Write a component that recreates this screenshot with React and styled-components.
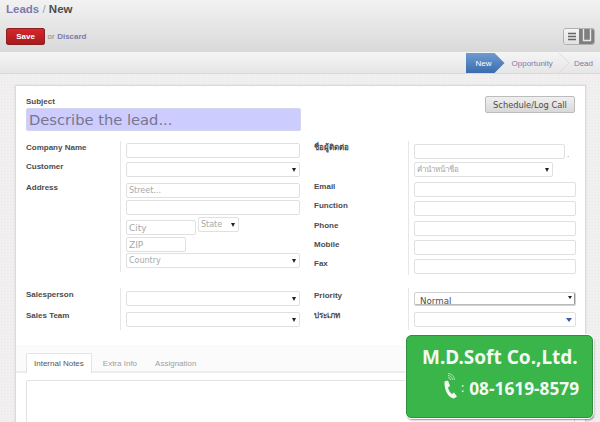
import React from 'react'
import styled, { createGlobalStyle } from 'styled-components'

const Global = createGlobalStyle`
  html, body {
    margin: 0;
    padding: 0;
    width: 600px;
    height: 422px;
    overflow: hidden;
    font-family: "Liberation Sans", Arial, sans-serif;
    color: #4c4c4c;
  }
  * { box-sizing: border-box; }
`

const Page = styled.div`
  position: relative;
  width: 600px;
  height: 422px;
  overflow: hidden;
  background-color: #f0eeee;
`
const Header = styled.div`
  height: 52px;
  padding: 3px 5px 0 6px;
  background: linear-gradient(#f2f2f2, #d9d9d9);
`
const Crumbs = styled.div`
  font-size: 11.5px;
  font-weight: bold;
  line-height: 13px;
  color: #4c4c4c;
`
const CrumbLink = styled.span`
  color: #7c7bad;
`
const CrumbSep = styled.span`
  color: #a0a0a0;
  font-weight: normal;
`
const ActionRow = styled.div`
  display: flex;
  justify-content: space-between;
  align-items: center;
  margin-top: 12px;
`
const SaveGroup = styled.div`
  display: flex;
  align-items: center;
  gap: 2.500px;
  font-size: 8px;
  color: #888;
`
const SaveButton = styled.button`
  width: 39px;
  height: 17px;
  padding: 0;
  border: 1px solid #8a2020;
  border-radius: 2px;
  background: linear-gradient(#d8262c, #a81a1e);
  color: #fff;
  font: bold 8px "Liberation Sans", sans-serif;
`
const Discard = styled.span`
  color: #7c7bad;
  font-weight: bold;
`
const Switch = styled.div`
  display: flex;
  width: 32px;
  height: 17px;
  border: 1px solid #b0b0b0;
  border-radius: 3px;
  overflow: hidden;
`
const SwitchPart = styled.div`
  flex: 1;
  display: flex;
  align-items: ${p => (p.$on ? 'flex-start' : 'center')};
  justify-content: center;
  background: ${p => (p.$on ? '#7f7f7f' : 'linear-gradient(#f4f4f4, #e2e2e2)')};
`
const StatusBar = styled.div`
  height: 22px;
  display: flex;
  justify-content: flex-end;
  align-items: stretch;
  padding-right: 7px;
  border-top: 1px solid #f4f4f4;
  border-bottom: 1px solid #d8d8d8;
  background: linear-gradient(#f4f4f4, #e6e6e6);
  font-size: 8px;
`
const StepActive = styled.div`
  width: 39px;
  padding-left: 10px;
  display: flex;
  align-items: center;
  color: #fff;
  background: linear-gradient(#6f9bd0, #3a6cae);
  clip-path: polygon(0 0, 29px 0, 100% 50%, 29px 100%, 0 100%);
`
const Step = styled.div`
  display: flex;
  align-items: center;
  color: #7c7bad;
  margin-left: ${p => p.$gap}px;
`
const StepChevron = styled.svg`
  width: 11px;
  height: 20px;
  margin-left: 6px;
  flex: none;
`
const Sheet = styled.div`
  height: 348px;
  padding: 11px 14px 0 15px;
  background-color: #f1efef;
  background-image: radial-gradient(#e8e6e6 0.6px, transparent 0.6px);
  background-size: 3px 3px;
`
const Card = styled.div`
  height: 400px;
  background: #fff;
  border: 1px solid #dadada;
  box-shadow: 0 0 2px #d8d8e0;
`
const Top = styled.div`
  display: flex;
  justify-content: space-between;
  align-items: flex-start;
  height: 55px;
  padding: 10px 10px 0 10px;
`
const SubjectLabel = styled.div`
  font-size: 8px;
  font-weight: bold;
  line-height: 11px;
  margin-bottom: 1px;
`
const SubjectInput = styled.div`
  width: 275px;
  height: 23px;
  padding-left: 2px;
  background: #ccccff;
  border: 1px solid #d4d4ec;
  border-radius: 2px;
  font: 14.7px/21px "DejaVu Sans", sans-serif;
  color: #77768c;
`
const ScheduleButton = styled.button`
  width: 90px;
  height: 17px;
  padding: 0;
  border: 1px solid #bcbcbc;
  border-radius: 2px;
  background: linear-gradient(#f0f0f0, #d8d8d8);
  color: #4c4c4c;
  font: 8.3px "DejaVu Sans", sans-serif;
`
const Columns = styled.div`
  display: flex;
  padding-left: 10px;
  height: ${p => p.$h}px;
`
const Column = styled.div`
  flex: none;
  display: grid;
  grid-template-columns: 94px ${p => p.$field}px;
  grid-auto-rows: min-content;
  align-content: start;
  width: 288px;
`
const Label = styled.div`
  font-size: 8px;
  font-weight: bold;
  line-height: 10px;
  color: #4c4c4c;
  padding-top: ${p => p.$top || 0}px;
`
const Cell = styled.div`
  border-left: 1px solid #e6e6e6;
  padding: ${p => p.$top || 0}px 0 ${p => p.$bottom || 0}px 5px;
`
const Input = styled.div`
  display: flex;
  justify-content: space-between;
  align-items: center;
  width: ${p => (p.$w ? p.$w + 'px' : '100%')};
  height: 15px;
  padding: 0 3px 0 2px;
  margin-top: ${p => p.$mt || 0}px;
  border: 1px solid #e0e0e0;
  border-radius: 2px;
  background: #fff;
  font: ${p => (p.$big ? 9 : 8)}px "DejaVu Sans", "Noto Sans", sans-serif;
  color: #a8a8a8;
`
const Arrow = styled.span`
  width: 0;
  height: 0;
  border-left: 2px solid transparent;
  border-right: 2px solid transparent;
  border-top: 4px solid ${p => p.$color || '#222'};
`
const TypeArrow = styled(Arrow)`
  border-left-width: 3px;
  border-right-width: 3px;
`
const CityRow = styled.div`
  display: flex;
  align-items: flex-start;
  gap: 2px;
`
const NameRow = styled.div`
  display: flex;
  align-items: flex-end;
  gap: 2px;
  font-size: 8px;
  color: #777;
`
const PrioritySelect = styled(Input)`
  height: 14px;
  border-color: #d0d0d0;
  box-shadow: inset 0 -1px 0 #bbb, inset -1px 0 0 #999;
  color: #4c4c4c;
  font-size: 8.7px;
  padding: 3px 3px 0 5px;
`
const PriorityArrow = styled(Arrow)`
  margin-top: -6px;
  border-top-width: 3px;
`
const TabBand = styled.div`
  display: flex;
  align-items: flex-end;
  height: 28px;
  margin-top: 13px;
  padding-left: 10px;
  background: #fbfbfb;
  border-bottom: 2px solid #ececec;
`
const Tab = styled.div`
  height: 20px;
  margin-bottom: -2px;
  padding: 0 ${p => (p.$active ? 7 : 8)}px;
  margin-right: ${p => (p.$active ? 2 : 0)}px;
  display: flex;
  align-items: center;
  font-size: 8px;
  color: ${p => (p.$active ? '#555' : '#a0a0a0')};
  background: ${p => (p.$active ? '#fff' : 'transparent')};
  border: 1px solid ${p => (p.$active ? '#e4e4e4' : 'transparent')};
  border-bottom: none;
  border-radius: 2px 2px 0 0;
`
const Notes = styled.div`
  height: 60px;
  margin: 7px 10px 0 10px;
  border: 1px solid #e2e2e2;
  border-radius: 2px;
`
const Badge = styled.div`
  position: absolute;
  left: 406px;
  top: 335px;
  width: 187px;
  height: 83px;
  padding-top: 11px;
  border: 1px solid #2f8f3c;
  border-radius: 5px;
  background: #39b54a;
  outline: 1px solid #fff;
  box-shadow: 1px 2px 2px rgba(0, 0, 0, 0.45);
  color: #f4f8f4;
  font-family: "Noto Sans", sans-serif;
  font-weight: bold;
`
const BadgeTitle = styled.div`
  font-size: 19px;
  line-height: 21px;
  padding-left: 15px;
  white-space: nowrap;
`
const BadgePhone = styled.div`
  display: flex;
  align-items: flex-end;
  margin-top: 4px;
  padding-left: 36px;
  font-size: 17.3px;
  line-height: 20px;
  white-space: nowrap;
`
const Colon = styled.span`
  font-size: 12px;
  font-weight: normal;
  margin: 0 5px 1px 3px;
`

const ListIcon = () => (
  <svg width="10" height="9" viewBox="0 0 10 9">
    <path d="M1 1.5h8M1 4.5h8M1 7.5h8" stroke="#666" strokeWidth="1.4" />
  </svg>
)

const FormIcon = () => (
  <svg width="10" height="13" viewBox="0 0 10 13">
    <path d="M1.500 0v11.500h7V0" fill="none" stroke="#e8e8e8" strokeWidth="1.4" />
  </svg>
)

const PhoneIcon = () => (
  <svg width="15" height="27" viewBox="0 0 15 27">
    <path d="M1.500 9.500 5 8.500 7 14 5 15.500C5.500 18 7 20.500 9 22L11 20.500 14 24.500 11 26.500C6 26 1 19 1.500 9.500Z" fill="#f4f8f4" />
    <path d="M5 5.500A2.500 2.500 0 0 1 7.500 8M5 3.500A4.500 4.500 0 0 1 9.500 8M5 1.500A6.500 6.500 0 0 1 11.500 8" fill="none" stroke="#cfe8d2" strokeWidth=".8" />
  </svg>
)

const App = () => (
  <Page>
    <Global />
    <Header>
      <Crumbs>
        <CrumbLink>Leads</CrumbLink> <CrumbSep>/</CrumbSep> New
      </Crumbs>
      <ActionRow>
        <SaveGroup>
          <SaveButton>Save</SaveButton>
          <span>or</span>
          <Discard>Discard</Discard>
        </SaveGroup>
        <Switch>
          <SwitchPart><ListIcon /></SwitchPart>
          <SwitchPart $on><FormIcon /></SwitchPart>
        </Switch>
      </ActionRow>
    </Header>
    <StatusBar>
      <StepActive>New</StepActive>
      <Step $gap={7}>Opportunity</Step>
      <StepChevron viewBox="0 0 11 20">
        <path d="M0 0 10 10 0 20" fill="none" stroke="#dcdcdc" />
      </StepChevron>
      <Step $gap={4}>Dead</Step>
    </StatusBar>
    <Sheet>
      <Card>
        <Top>
          <div>
            <SubjectLabel>Subject</SubjectLabel>
            <SubjectInput>Describe the lead...</SubjectInput>
          </div>
          <ScheduleButton>Schedule/Log Call</ScheduleButton>
        </Top>
        <Columns $h={147}>
          <Column $field={180}>
            <Label $top={2}>Company Name</Label>
            <Cell $top={2} $bottom={4}><Input /></Cell>
            <Label>Customer</Label>
            <Cell $bottom={6}><Input><span /><Arrow /></Input></Cell>
            <Label>Address</Label>
            <Cell $bottom={4}>
              <Input>Street...</Input>
              <Input $mt={2} />
              <CityRow>
                <Input $w={70} $mt={5} $big>City</Input>
                <Input $w={41} $mt={2}>State<Arrow /></Input>
              </CityRow>
              <Input $w={60} $mt={2} $big>ZIP</Input>
              <Input $mt={1}>Country<Arrow /></Input>
            </Cell>
          </Column>
          <Column $field={168}>
            <Label $top={2}>ชื่อผู้ติดต่อ</Label>
            <Cell $top={3} $bottom={5}>
              <NameRow><Input $w={151} />.</NameRow>
              <Input $w={139} $mt={3}>คำนำหน้าชื่อ<Arrow /></Input>
            </Cell>
            <Label>Email</Label>
            <Cell $bottom={4}><Input /></Cell>
            <Label>Function</Label>
            <Cell $bottom={5}><Input /></Cell>
            <Label>Phone</Label>
            <Cell $bottom={4}><Input /></Cell>
            <Label>Mobile</Label>
            <Cell $bottom={4}><Input /></Cell>
            <Label>Fax</Label>
            <Cell $bottom={1}><Input /></Cell>
          </Column>
        </Columns>
        <Columns $h={44}>
          <Column $field={180}>
            <Label $top={2}>Salesperson</Label>
            <Cell $top={3} $bottom={4}><Input><span /><Arrow /></Input></Cell>
            <Label $top={1}>Sales Team</Label>
            <Cell $top={2} $bottom={3}><Input><span /><Arrow /></Input></Cell>
          </Column>
          <Column $field={168}>
            <Label $top={3}>Priority</Label>
            <Cell $top={4} $bottom={4}><PrioritySelect>Normal<PriorityArrow /></PrioritySelect></Cell>
            <Label $top={1}>ประเภท</Label>
            <Cell $top={2} $bottom={3}><Input><span /><TypeArrow $color="#3a5fa8" /></Input></Cell>
          </Column>
        </Columns>
        <TabBand>
          <Tab $active>Internal Notes</Tab>
          <Tab>Extra Info</Tab>
          <Tab>Assignation</Tab>
        </TabBand>
        <Notes />
      </Card>
    </Sheet>
    <Badge>
      <BadgeTitle>M.D.Soft Co.,Ltd.</BadgeTitle>
      <BadgePhone>
        <PhoneIcon />
        <Colon>:</Colon>
        08-1619-8579
      </BadgePhone>
    </Badge>
  </Page>
)

export default App
